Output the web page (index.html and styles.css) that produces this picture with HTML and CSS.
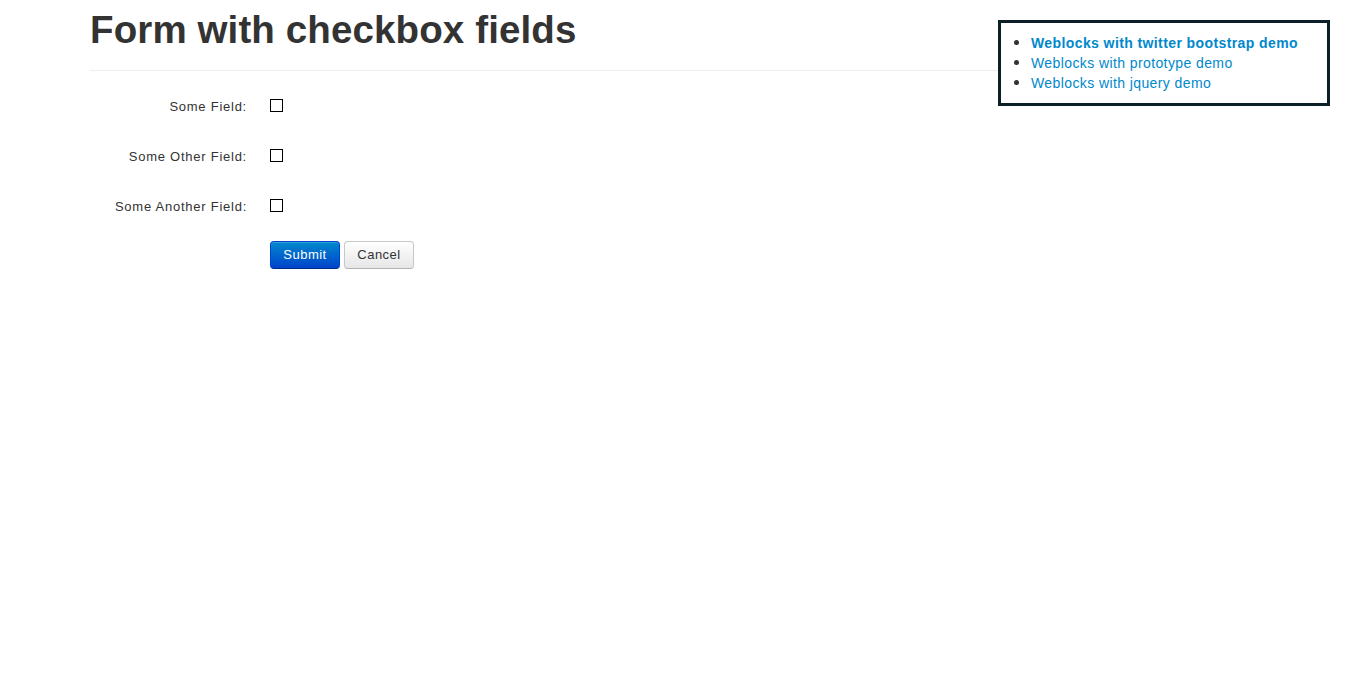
FILE: index.html
```html
<!DOCTYPE html>
<html>
<head>
<meta charset="utf-8">
<link rel="stylesheet" href="styles.css">
</head>
<body>
<div class="container">
  <div class="page-header">
    <h1>Form with checkbox fields</h1>
  </div>
  <form class="form-horizontal">
    <div class="control-group">
      <label class="control-label">Some Field:</label>
      <div class="controls"><input type="checkbox" class="cb"></div>
    </div>
    <div class="control-group">
      <label class="control-label">Some Other Field:</label>
      <div class="controls"><input type="checkbox" class="cb"></div>
    </div>
    <div class="control-group">
      <label class="control-label">Some Another Field:</label>
      <div class="controls"><input type="checkbox" class="cb"></div>
    </div>
    <div class="actions">
      <button type="button" class="btn btn-primary">Submit</button>
      <button type="button" class="btn">Cancel</button>
    </div>
  </form>
</div>
<div class="demo-box">
  <ul>
    <li><a href="#" class="current">Weblocks with twitter bootstrap demo</a></li>
    <li><a href="#">Weblocks with prototype demo</a></li>
    <li><a href="#">Weblocks with jquery demo</a></li>
  </ul>
</div>
</body>
</html>
```
FILE: styles.css
```css
html, body {
  margin: 0;
  padding: 0;
  background: #fff;
}
body {
  font-family: "Liberation Sans", Arial, Helvetica, sans-serif;
  font-size: 14px;
  line-height: 20px;
  color: #333;
}
.container {
  width: 1170px;
  margin: 0 auto;
}
.page-header {
  border-bottom: 1px solid #eee;
  padding-bottom: 20px;
  margin-bottom: 20px;
}
.page-header h1 {
  margin: 0;
  padding-top: 10px;
  font-size: 38.5px;
  line-height: 40px;
  font-weight: bold;
  color: #333;
  letter-spacing: 0.12px;
}
.control-group {
  display: flex;
  align-items: flex-start;
  height: 30px;
  margin-bottom: 20px;
}
.control-label {
  width: 160px;
  box-sizing: border-box;
  padding-right: 3px;
  text-align: right;
  font-size: 13px;
  padding-top: 6px;
  line-height: 20px;
  letter-spacing: 0.75px;
}
.controls {
  margin-left: 20px;
  padding-top: 8px;
}
.cb {
  -webkit-appearance: none;
  appearance: none;
  display: block;
  width: 13px;
  height: 13px;
  margin: 0;
  border: 1px solid #000;
  background: #fff;
  box-sizing: border-box;
}
.actions {
  padding-left: 180px;
  display: flex;
  gap: 4px;
  margin-top: 2px;
}
.btn {
  width: 70px;
  height: 28px;
  box-sizing: border-box;
  padding: 0;
  text-align: center;
  font-family: "Liberation Sans", Arial, sans-serif;
  font-size: 13px;
  line-height: 26px;
  color: #333;
  background: linear-gradient(#fff, #e6e6e6);
  border: 1px solid #c8c8c8;
  border-bottom-color: #b3b3b3;
  border-radius: 4px;
  box-shadow: inset 0 1px 0 rgba(255,255,255,.2), 0 1px 2px rgba(0,0,0,.05);
  letter-spacing: 0.5px;
}
.btn-primary {
  color: #fff;
  background: linear-gradient(#0088cc, #0044cc);
  border-color: #0044cc #0044cc #002a80;
}
.demo-box {
  position: absolute;
  top: 20px;
  left: 998px;
  width: 332px;
  height: 86px;
  box-sizing: border-box;
  border: 3px solid #0c1f26;
  background: #fff;
}
.demo-box ul {
  margin: 0;
  padding: 10px 0 0 30px;
  list-style: disc;
  font-size: 14px;
  line-height: 20px;
}
.demo-box li::marker {
  font-size: 17px;
}
.demo-box a {
  color: #0088cc;
  text-decoration: none;
  letter-spacing: 0.4px;
}
.demo-box a.current {
  font-weight: bold;
}
```
